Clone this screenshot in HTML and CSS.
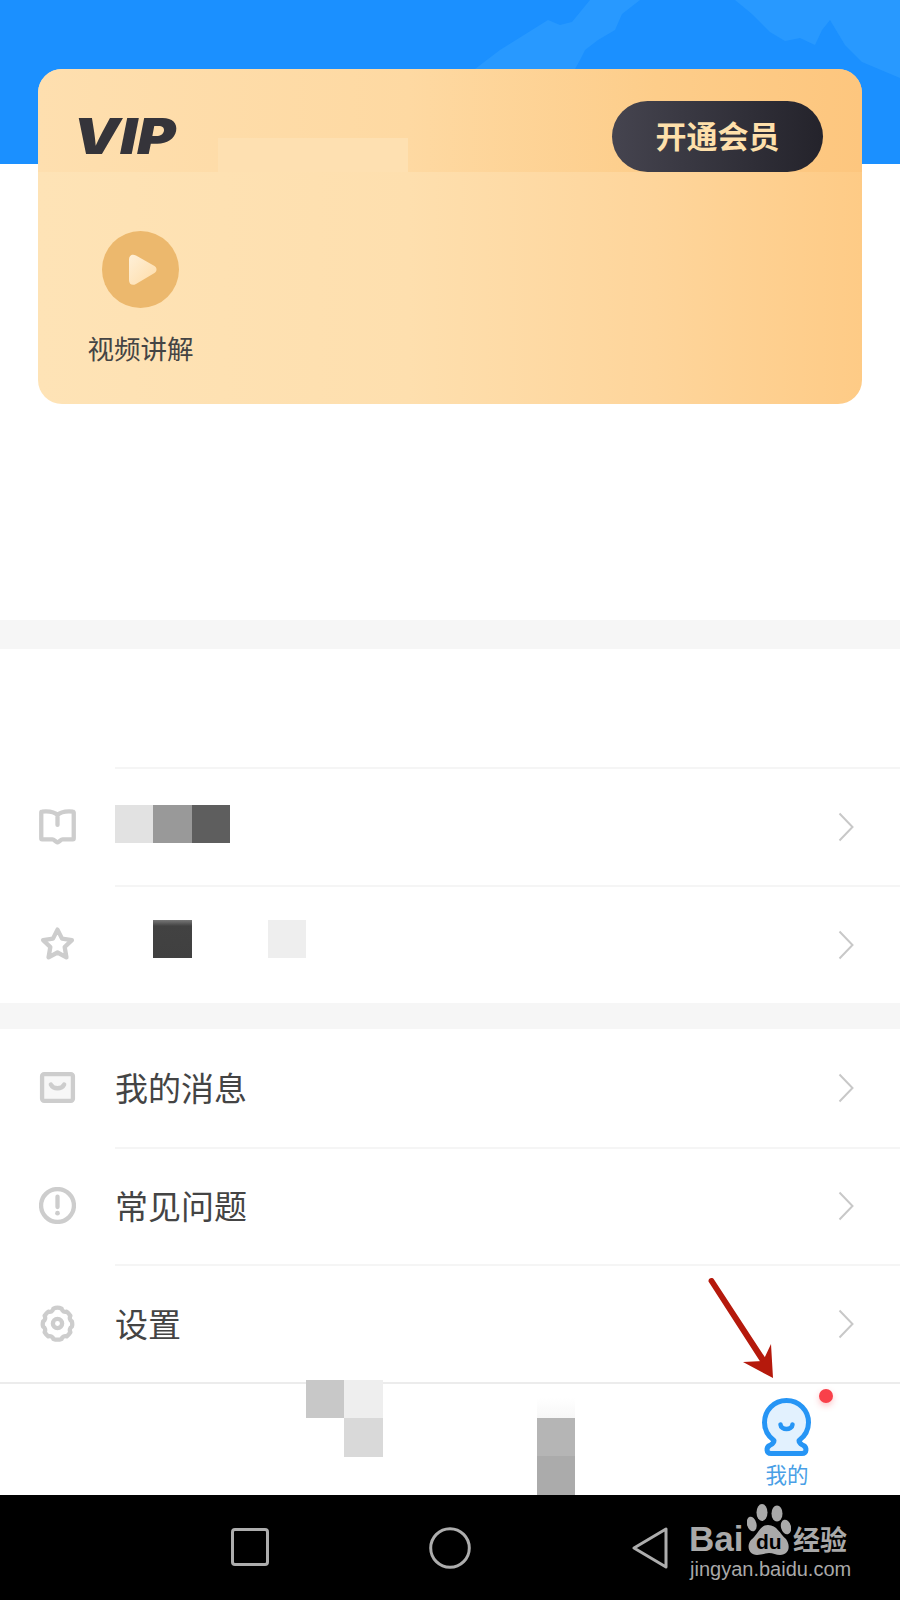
FILE: index.html
```html
<!DOCTYPE html>
<html lang="zh-CN">
<head>
<meta charset="utf-8">
<title>我的</title>
<link rel="stylesheet" href="styles.css">
</head>
<body>
<div class="page">
  <header class="hero">
    <svg class="hero-art" viewBox="0 0 900 164" aria-hidden="true">
      <path class="hero-shape" d="M475 69L500 50L540 25L548 20L560 25L572 22L590 0H640L622 14L615 30L598 40L585 50L580 60L575 69Z"/>
      <path class="hero-shape" d="M735 0L752 14L770 32L785 41L800 38L815 45L822 30L830 20L845 45L862 62L900 78V0Z"/>
    </svg>
  </header>

  <section class="vip-section">
    <div class="vip-card">
      <div class="vip-top">
        <div class="vip-patch"></div>
        <span class="vip-logo">VIP</span>
        <span class="vip-button">开通会员</span>
      </div>
      <div class="vip-feature">
        <svg class="play-icon" viewBox="0 0 77 77" aria-hidden="true">
          <defs>
            <linearGradient id="playFill" x1="0" y1="0" x2="1" y2="1">
              <stop offset="0" stop-color="#fff0d8"/>
              <stop offset="1" stop-color="#fedca8"/>
            </linearGradient>
          </defs>
          <circle cx="38.500" cy="38.500" r="38.500" fill="#ecb86d"/>
          <path d="M27 28.500c0-4.500 3.500-6 7-4l18.500 10.500c2.700 1.700 2.700 5.300 0 7L34 53c-3.500 2-7 .5-7-4z" fill="url(#playFill)"/>
        </svg>
        <span class="feature-label">视频讲解</span>
      </div>
    </div>
  </section>

  <div class="gap gap-first"></div>

  <section class="list list-a">
    <div class="row row-empty"></div>
    <div class="row">
      <span class="row-icon">
        <svg viewBox="0 0 36 36" aria-hidden="true"><path class="ico" d="M18 7C15 3.500 9 3 3 3.500C2.500 3.500 2.200 4 2.200 4.500V29.500C2.200 30 2.500 30.500 3 30.500H13C15 30.500 16 33 18 33.500C20 33 21 30.500 23 30.500H33C33.500 30.500 33.800 30 33.800 29.500V4.500C33.800 4 33.500 3.500 33 3.500C27 3 21 3.500 18 7ZM18 7V16.500"/></svg>
      </span>
      <div class="row-body">
        <div class="mosaic">
          <i class="cell c-e2"></i><i class="cell c-99"></i><i class="cell c-5e"></i>
        </div>
        <svg class="chev" viewBox="0 0 16 30" aria-hidden="true"><path d="M1.500 1.500L14.500 15L1.500 28.500"/></svg>
      </div>
    </div>
    <div class="row">
      <span class="row-icon">
        <svg viewBox="0 0 36 36" aria-hidden="true"><path class="ico" d="M18 3.500L22.400 12.300L32 13.700L25 20.500L26.700 30.500L18 25.800L9.300 30.500L11 20.500L4 13.700L13.600 12.300Z"/></svg>
      </span>
      <div class="row-body">
        <div class="mosaic mosaic-high">
          <i class="cell c-none"></i><i class="cell c-40"></i><i class="cell c-none"></i><i class="cell c-none"></i><i class="cell c-ee"></i>
        </div>
        <svg class="chev" viewBox="0 0 16 30" aria-hidden="true"><path d="M1.500 1.500L14.500 15L1.500 28.500"/></svg>
      </div>
    </div>
  </section>

  <div class="gap gap-second"></div>

  <section class="list list-b">
    <div class="row">
      <span class="row-icon">
        <svg viewBox="0 0 36 36" aria-hidden="true"><rect class="ico ico-mail" x="3" y="5" width="30" height="26" rx="2"/><path class="ico" d="M11.500 15C14 20 22 20 24.500 15"/></svg>
      </span>
      <div class="row-body">
        <span class="row-text">我的消息</span>
        <svg class="chev" viewBox="0 0 16 30" aria-hidden="true"><path d="M1.500 1.500L14.500 15L1.500 28.500"/></svg>
      </div>
    </div>
    <div class="row">
      <span class="row-icon">
        <svg viewBox="0 0 36 36" aria-hidden="true"><circle class="ico" cx="18" cy="18" r="16"/><path class="ico" d="M18 9.500V19.500"/><circle cx="18" cy="25.500" r="2.300" fill="#cdcdcd"/></svg>
      </span>
      <div class="row-body">
        <span class="row-text">常见问题</span>
        <svg class="chev" viewBox="0 0 16 30" aria-hidden="true"><path d="M1.500 1.500L14.500 15L1.500 28.500"/></svg>
      </div>
    </div>
    <div class="row">
      <span class="row-icon">
        <svg viewBox="0 0 36 36" aria-hidden="true"><path class="ico" d="M18 2.500C19.500 2.500 21 3 22 3.500C22.500 6 24.500 7.200 27 6.500C28.500 7.500 29.500 9 30.500 10.500C29.500 12.500 30 15 32 16C32.500 18 32.500 19.500 32 21C30 22 29.500 24.500 30.500 26.500C29.500 28 28.500 29.500 27 30.500C24.500 29.800 22.500 31 22 33C20 33.700 16 33.700 14 33C13.500 31 11.500 29.800 9 30.500C7.500 29.500 6.500 28 5.500 26.500C6.500 24.500 6 22 4 21C3.500 19.500 3.500 18 4 16C6 15 6.500 12.500 5.500 10.500C6.500 9 7.500 7.500 9 6.500C11.500 7.200 13.500 6 14 3.500C15 3 16.500 2.500 18 2.500Z"/><circle class="ico" cx="18" cy="18" r="4.500"/></svg>
      </span>
      <div class="row-body">
        <span class="row-text">设置</span>
        <svg class="chev" viewBox="0 0 16 30" aria-hidden="true"><path d="M1.500 1.500L14.500 15L1.500 28.500"/></svg>
      </div>
    </div>
  </section>

  <nav class="tabbar">
    <div class="tab-mosaic tab-mosaic-a">
      <i class="cell c-c8"></i><i class="cell c-ee"></i><i class="cell c-none"></i><i class="cell c-d8"></i>
    </div>
    <div class="tab-mosaic tab-mosaic-b">
      <i class="cell c-fade"></i><i class="cell c-b4"></i><i class="cell c-aa"></i>
    </div>
    <div class="tab-me">
      <span class="tab-dot"></span>
      <svg class="tab-icon" viewBox="0 0 49 58" aria-hidden="true">
        <path d="M24.500 2.500C11.800 2.500 2.500 12.500 2.500 24.500C2.500 32.500 6.500 38.500 12 42.500C12 45.500 10 46 7.500 47.500C4 49.500 4 55.500 9 55.500H40C45 55.500 45 49.500 41.500 47.500C39 46 37 45.500 37 42.500C42.500 38.500 46.500 32.500 46.500 24.500C46.500 12.500 37.200 2.500 24.500 2.500Z" fill="#e2f1fe" stroke="#2695f5" stroke-width="5" stroke-linejoin="round"/>
        <path d="M18.500 26.500C19 32.500 30 32.500 30.500 26.500" fill="none" stroke="#2695f5" stroke-width="4.500" stroke-linecap="round"/>
      </svg>
      <span class="tab-label">我的</span>
    </div>
  </nav>

  <footer class="sysnav">
    <svg class="nav-square" viewBox="0 0 38 38" aria-hidden="true"><rect class="nav-line" x="1.500" y="1.500" width="35" height="35" rx="2.500"/></svg>
    <svg class="nav-circle" viewBox="0 0 42 42" aria-hidden="true"><circle class="nav-line" cx="21" cy="21" r="19.300"/></svg>
    <svg class="nav-back" viewBox="0 0 36 42" aria-hidden="true"><path class="nav-line" d="M34 2V40L2 21Z"/></svg>
  </footer>

  <svg class="arrow" viewBox="0 0 900 1600" aria-hidden="true">
    <path d="M708.500 1281.500C708 1278 712.500 1277 714 1279.500L768 1362L763 1366Z" fill="#b5190c"/>
    <path d="M773 1378L743 1362L763 1361L771 1344Z" fill="#b5190c"/>
  </svg>

  <div class="watermark">
    <div class="wm-top">
      <span class="wm-bai">Bai</span>
      <svg class="wm-paw" viewBox="0 0 44 52" aria-hidden="true">
        <ellipse cx="15" cy="8.500" rx="5.500" ry="8.500" fill="#a9a9a9"/>
        <ellipse cx="30" cy="9.500" rx="5.500" ry="8" fill="#a9a9a9"/>
        <ellipse cx="4.700" cy="20" rx="4.700" ry="7.500" transform="rotate(-15 4.700 20)" fill="#a9a9a9"/>
        <ellipse cx="39" cy="23" rx="5" ry="7.500" transform="rotate(-15 39 23)" fill="#a9a9a9"/>
        <path d="M21 21C13 21 11 30 4 36C-1 42 2 51 10 51C15 51 18 49 22 49C26 49 29 51 33 51C42 51 44 42 39 35C33 30 30 21 21 21Z" fill="#a9a9a9"/>
      </svg>
      <span class="wm-du">du</span>
      <span class="wm-cn">经验</span>
    </div>
    <div class="wm-url">jingyan.baidu.com</div>
  </div>
</div>
</body>
</html>
```

FILE: styles.css
```css
* {
  box-sizing: border-box;
}

html,
body {
  margin: 0;
  padding: 0;
  background: #fff;
}

.page {
  position: relative;
  width: 900px;
  height: 1600px;
  overflow: hidden;
  background: #fff;
  font-family: "Noto Sans CJK SC", "Noto Sans", sans-serif;
  color: #444;
}

/* header */
.hero {
  position: relative;
  height: 164px;
  background: #1b90ff;
}

.hero-art {
  display: block;
  width: 900px;
  height: 164px;
}

.hero-shape {
  fill: #2899ff;
}

/* VIP card */
.vip-section {
  display: flow-root;
  height: 456px;
  padding: 0 38px;
}

.vip-card {
  position: relative;
  height: 335px;
  margin-top: -95px;
  border-radius: 24px;
  overflow: hidden;
  background: linear-gradient(90deg, #fee3b6 0%, #fedfae 45%, #fed59b 75%, #fecb86 100%);
}

.vip-top {
  position: relative;
  display: flex;
  align-items: flex-start;
  justify-content: space-between;
  height: 103px;
  padding: 32px 39px 0 38px;
  background: linear-gradient(90deg, #fedfaf 0%, #fed9a2 45%, #fdcd8a 75%, #fdc67e 100%);
}

.vip-patch {
  position: absolute;
  left: 180px;
  top: 69px;
  width: 190px;
  height: 34px;
  background: #fee0b1;
}

.vip-logo {
  position: relative;
  width: 100px;
  height: 71px;
  padding-top: 17px;
  margin-left: -3px;
  font-family: Inter, "Liberation Sans", sans-serif;
  font-size: 50px;
  font-weight: 900;
  font-style: italic;
  line-height: 37px;
  color: #35343a;
  transform: scaleX(1.18);
  transform-origin: left center;
}

.vip-button {
  position: relative;
  display: flex;
  align-items: center;
  justify-content: center;
  width: 211px;
  height: 71px;
  padding-bottom: 4px;
  border-radius: 36px;
  background: linear-gradient(90deg, #45444f 0%, #24232b 100%);
  color: #fee0ab;
  font-size: 31px;
  font-weight: 700;
}

.vip-feature {
  display: flex;
  flex-direction: column;
  align-items: center;
  width: 105px;
  margin: 59px 0 0 50px;
}

.play-icon {
  display: block;
  flex: none;
  width: 77px;
  height: 77px;
}

.feature-label {
  margin-top: 22px;
  font-size: 26.500px;
  line-height: 36px;
  white-space: nowrap;
  color: #444;
}

/* separators */
.gap {
  background: #f6f6f6;
}

.gap-first {
  height: 29px;
}

.gap-second {
  height: 26px;
}

/* list */
.list-a .row {
  height: 118px;
}

.list-b .row {
  height: 117.670px;
}

.row {
  display: flex;
  align-items: center;
}

.row-icon {
  display: flex;
  flex: none;
  align-items: center;
  justify-content: center;
  width: 115px;
  padding-right: 1px;
}

.row-icon svg {
  display: block;
  width: 37px;
  height: 37px;
}

.ico {
  fill: none;
  stroke: #cdcdcd;
  stroke-width: 4.200;
  stroke-linejoin: round;
  stroke-linecap: round;
}

.ico-mail {
  fill: #f7f7f7;
}

.row-body {
  display: flex;
  flex: 1;
  align-items: center;
  justify-content: space-between;
  height: 100%;
  padding-right: 46px;
  border-top: 2px solid #f5f5f5;
}

.list-b .row:first-child .row-body {
  border-top: 0;
}

.row-text {
  margin-top: -2px;
  font-size: 33px;
  line-height: 44px;
  color: #444;
}

.chev {
  display: block;
  flex: none;
  width: 16px;
  height: 30px;
}

.chev path {
  fill: none;
  stroke: #c8c8c8;
  stroke-width: 2;
}

.mosaic {
  display: flex;
  margin-top: -6px;
}

.mosaic-high {
  margin-top: -12px;
}

.cell {
  display: block;
  width: 38.300px;
  height: 38.300px;
}

.c-none {
  background: transparent;
}

.c-e2 {
  background: #e2e2e2;
}

.c-99 {
  background: #999;
}

.c-5e {
  background: #5e5e5e;
}

.c-40 {
  background: linear-gradient(180deg, #777 0%, #424242 16%, #404040 100%);
}

.c-ee {
  background: #eee;
}

.c-c8 {
  background: #c8c8c8;
}

.c-d8 {
  background: #d9d9d9;
}

.c-b4 {
  background: #b5b5b5;
}

.c-aa {
  background: #ababab;
}

.c-fade {
  height: 20px;
  background: linear-gradient(180deg, #fff 0%, #f7f7f7 100%);
}

/* tab bar */
.tabbar {
  display: flex;
  height: 113px;
  border-top: 2px solid #ececec;
}

.tab-mosaic {
  flex: none;
}

.tab-mosaic-a {
  display: grid;
  grid-template-columns: 38.300px 38.300px;
  align-content: start;
  width: 76.600px;
  margin: -4px 0 0 306px;
}

.tab-mosaic-b {
  width: 38.300px;
  margin: 14px 0 0 154px;
}

.tab-me {
  position: relative;
  display: flex;
  flex-direction: column;
  align-items: center;
  width: 120px;
  margin-left: 152px;
  padding-top: 14px;
}

.tab-dot {
  position: absolute;
  left: 92px;
  top: 5px;
  width: 14px;
  height: 14px;
  border-radius: 50%;
  background: #f9404a;
  box-shadow: 0 3px 6px rgba(249, 64, 74, 0.3);
}

.tab-icon {
  display: block;
  flex: none;
  width: 49px;
  height: 58px;
}

.tab-label {
  margin-top: 3px;
  font-size: 21.500px;
  line-height: 30px;
  color: #4a9fe6;
}

/* system navigation */
.sysnav {
  display: flex;
  align-items: flex-start;
  height: 105px;
  padding: 32px 0 0 231px;
  background: #000;
}

.nav-square {
  display: block;
  width: 38px;
  height: 38px;
  margin-top: 1px;
}

.nav-circle {
  display: block;
  width: 42px;
  height: 42px;
  margin-left: 160px;
}

.nav-back {
  display: block;
  width: 36px;
  height: 42px;
  margin-left: 161px;
}

.nav-line {
  fill: none;
  stroke: #adadad;
  stroke-width: 3;
  stroke-linejoin: round;
}

/* overlays */
.arrow {
  position: absolute;
  left: 0;
  top: 0;
  width: 900px;
  height: 1600px;
  pointer-events: none;
}

.watermark {
  position: absolute;
  left: 689px;
  top: 1504px;
  width: 170px;
  color: #a9a9a9;
}

.wm-top {
  position: relative;
  display: flex;
  align-items: flex-end;
  height: 52px;
}

.wm-bai {
  width: 58px;
  font-family: "Liberation Sans", sans-serif;
  font-size: 35px;
  font-weight: 700;
  line-height: 34px;
}

.wm-paw {
  display: block;
  flex: none;
  width: 44px;
  height: 52px;
}

.wm-du {
  position: absolute;
  left: 67px;
  top: 27px;
  font-family: "Liberation Sans", sans-serif;
  font-size: 21px;
  font-weight: 700;
  line-height: 22px;
  color: #000;
}

.wm-cn {
  margin-left: 2px;
  font-size: 27px;
  font-weight: 700;
  line-height: 34px;
  white-space: nowrap;
}

.wm-url {
  margin: 1px 0 0 1px;
  font-family: "Liberation Sans", sans-serif;
  font-size: 20px;
  line-height: 24px;
  white-space: nowrap;
}
```
